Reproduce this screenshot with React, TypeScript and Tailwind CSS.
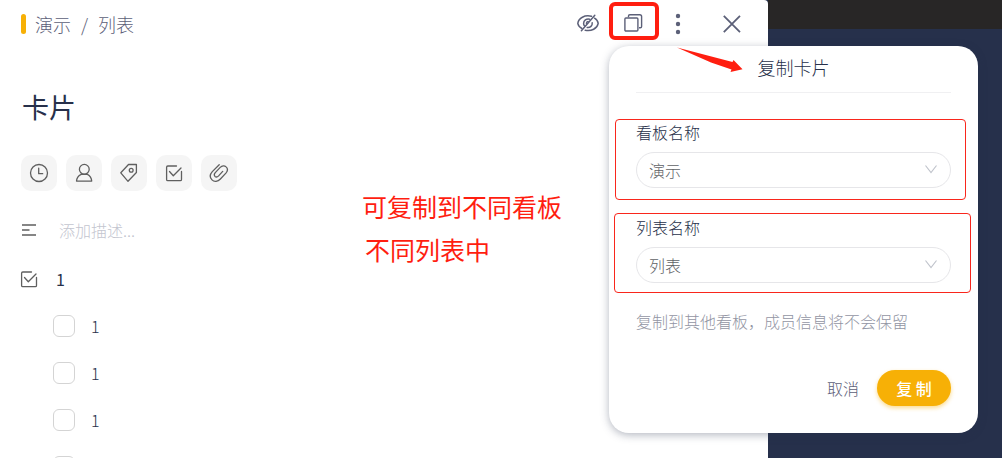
import { useState } from 'react';
import type { ReactNode } from 'react';

const items = [
  { id: 1, name: '1' },
  { id: 2, name: '1' },
  { id: 3, name: '1' },
  { id: 4, name: '1' },
];

function Icon({ size = 20, children }: { size?: number; children: ReactNode }) {
  return (
    <svg
      width={size}
      height={size}
      viewBox={`0 0 ${size} ${size}`}
      fill="none"
      stroke="currentColor"
      strokeWidth="1.3"
      strokeLinecap="round"
      strokeLinejoin="round"
      aria-hidden="true"
    >
      {children}
    </svg>
  );
}

const ClockIcon = () => (
  <Icon>
    <circle cx="10" cy="10" r="8.5" />
    <path d="M9.7 5.2v5.5h4" />
  </Icon>
);

const MemberIcon = () => (
  <Icon>
    <circle cx="10.3" cy="6.3" r="4.9" />
    <path d="M7.2 11.4h6.2c2.600 1.300 4.100 3.500 4.300 6.700H2.500c.2-3.200 1.900-5.400 4.700-6.700z" />
  </Icon>
);

const TagIcon = () => (
  <Icon>
    <path d="M9.5 1.500h7.900v8L9 18.300l-7.200-8.500z" />
    <circle cx="12.200" cy="7.300" r="1.900" />
  </Icon>
);

const CheckIcon = () => (
  <Icon>
    <path d="M12.5 3H3.8a1.200 1.200 0 0 0-1.200 1.200v12.300a1.200 1.200 0 0 0 1.200 1.200h12.500a1.200 1.200 0 0 0 1.200-1.200V8.500" />
    <path d="M5.5 8.500l3.800 4.200L17 5" />
  </Icon>
);

const ClipIcon = () => (
  <Icon>
    <path d="M10.2 1.700 3.3 8.600c-2.700 3-2.300 6.300-.3 8.300 2.200 2.200 5.700 1.900 8.400-.9l5.500-5.900c1.900-2.200 1.800-4.700.2-6.200-1.600-1.600-4-1.500-5.900.5l-4.900 5.200c-1.200 1.400-1.200 2.900-.3 3.800 1 .9 2.400.7 3.600-.5l4.100-4.500" />
  </Icon>
);

const tools = [
  { label: '时间', icon: <ClockIcon /> },
  { label: '成员', icon: <MemberIcon /> },
  { label: '标签', icon: <TagIcon /> },
  { label: '清单', icon: <CheckIcon /> },
  { label: '附件', icon: <ClipIcon /> },
];

function SelectField({ id, label, options }: { id: string; label: string; options: string[] }) {
  return (
    <>
      <label htmlFor={id} className="block text-base leading-6 text-[#27304a]">
        {label}
      </label>
      <div className="relative mt-2">
        <select
          id={id}
          className="block h-9 w-full appearance-none rounded-full border border-[#e6e6e9] bg-white px-3 text-base text-[#606266] outline-none"
        >
          {options.map((option) => (
            <option key={option}>{option}</option>
          ))}
        </select>
        <svg
          className="pointer-events-none absolute top-3 right-3 text-[#c0c4cc]"
          width="16"
          height="12"
          viewBox="0 0 16 12"
          fill="none"
          stroke="currentColor"
          strokeWidth="1.2"
          aria-hidden="true"
        >
          <path d="M2.5 1.500 8 8.500l5.500-7" />
        </svg>
      </div>
    </>
  );
}

function CopyDialog() {
  return (
    <form
      aria-label="复制卡片"
      className="absolute top-[46px] right-6 w-[369px] rounded-[20px] bg-white pb-[27px] shadow-[0_2px_8px_rgba(38,48,75,0.35)]"
      onSubmit={(e) => e.preventDefault()}
    >
      <h2 className="mx-[27px] border-b border-[#f0f0f2] pb-1 text-center text-lg leading-[42px] text-[#27304a]">
        复制卡片
      </h2>

      <div className="mt-[26px] mr-3 ml-[6px] rounded border border-[#f9261c] pr-[14px] pb-[11px] pl-5">
        <SelectField id="board" label="看板名称" options={['演示']} />
      </div>
      <div className="mt-[13px] mr-[7px] ml-[5px] rounded border border-[#f9261c] pt-px pr-[19px] pb-[9px] pl-[21px]">
        <SelectField id="list" label="列表名称" options={['列表']} />
      </div>

      <div className="px-[27px]">
        <p className="mt-4 text-base leading-6 text-[#9295a3]">复制到其他看板，成员信息将不会保留</p>
        <div className="mt-[37px] flex items-center justify-end gap-[18px]">
          <button type="button" className="text-base text-[#5c6078]">
            取消
          </button>
          <button
            type="submit"
            className="h-9 w-[74px] rounded-full bg-[#f7b006] text-base font-medium text-white shadow-[0_2px_4px_rgba(247,176,6,0.45)]"
          >
            复 制
          </button>
        </div>
      </div>
    </form>
  );
}

export default function App() {
  const [done, setDone] = useState<number[]>([]);

  const toggle = (id: number) => {
    setDone((prev) => (prev.includes(id) ? prev.filter((d) => d !== id) : [...prev, id]));
  };

  return (
    <div className="relative flex h-screen overflow-hidden bg-[#26304b] font-['Noto_Sans_CJK_SC',sans-serif] font-light">
      {/* Card detail */}
      <main className="min-w-0 flex-1 overflow-hidden rounded-tr bg-white pl-[21px]">
        <header className="flex h-12 items-center justify-between pr-[25px]">
          <nav className="flex items-center text-lg text-[#5c6078]">
            <span className="mr-[9px] h-5 w-[5px] rounded-sm bg-[#f7b006]" />
            <a href="#board">演示</a>
            <span className="mx-[10px]">/</span>
            <a href="#list">列表</a>
          </nav>
          <div className="flex h-12 items-start text-[#5c6078]">
            <button type="button" aria-label="关注" className="mt-3 mr-[10px]">
              <svg width="22" height="22" viewBox="0 0 22 22" fill="none" stroke="currentColor" strokeWidth="1.5" strokeLinecap="round" aria-hidden="true">
                <path d="M14.5 4.300C7.500 2.700 1.700 6 .8 11.300c.4 2.200 1.900 4 4.100 5.200" />
                <path d="M8.200 18.300c6.300 1.300 12-1.800 13-7-.3-2-1.600-3.900-3.700-5.100" />
                <path d="M12.6 7.200C9.300 6.500 6.600 8.500 6.600 11.500c0 1 .4 1.900 1 2.500M10.200 15.500c3.100.4 5.300-1.800 5-4.700M9.400 11.300c.1-.9.800-1.600 1.700-1.700" />
                <path d="M17.8 3.200 4.400 18.800" />
              </svg>
            </button>
            <button
              type="button"
              aria-label="复制"
              className="mt-[2px] flex h-[38px] w-[50px] items-center justify-center rounded-md border-4 border-[#ff1e10]"
            >
              <svg className="mt-1" width="20" height="20" viewBox="0 0 20 20" fill="none" stroke="currentColor" strokeWidth="1.4" aria-hidden="true">
                <rect x=".9" y="5" width="13" height="13" rx="1" />
                <path d="M4.500 4.200V3a1.300 1.300 0 0 1 1.300-1.300h10A1.800 1.800 0 0 1 17.600 3.500v9.900a1.300 1.300 0 0 1-1.300 1.300H15" />
              </svg>
            </button>
            <button type="button" aria-label="更多" className="mt-3 ml-[13px]">
              <svg width="12" height="24" viewBox="0 0 12 24" fill="currentColor" aria-hidden="true">
                <circle cx="6" cy="4" r="2.200" />
                <circle cx="6" cy="12" r="2.200" />
                <circle cx="6" cy="20" r="2.200" />
              </svg>
            </button>
            <button type="button" aria-label="关闭" className="mt-3 ml-[37px]">
              <svg width="22" height="24" viewBox="0 0 22 24" fill="none" stroke="currentColor" strokeWidth="1.8" aria-hidden="true">
                <path d="M2.800 3.800 19 20.200M19 3.800 2.800 20.200" />
              </svg>
            </button>
          </div>
        </header>

        <h1 className="mt-[39px] pl-px text-[27px] leading-10 font-normal text-[#27304a]">卡片</h1>

        <div className="mt-7 flex gap-[9px]">
          {tools.map((tool) => (
            <button
              key={tool.label}
              type="button"
              aria-label={tool.label}
              className="flex size-9 items-center justify-center rounded-[10px] bg-[#f5f5f5] text-[#5f5f5f]"
            >
              {tool.icon}
            </button>
          ))}
        </div>

        {/* Description */}
        <div className="mt-[27px] flex h-6 items-center text-[#5f5f5f]">
          <svg width="16" height="14" viewBox="0 0 16 14" stroke="currentColor" strokeWidth="1.3" aria-hidden="true">
            <path d="M1 2h14M1 7h7.500M1 12h14" />
          </svg>
          <input
            aria-label="描述"
            placeholder="添加描述..."
            className="ml-[22px] w-60 bg-transparent text-base outline-none placeholder:text-[#c3c5cf]"
          />
        </div>

        {/* Checklist */}
        <section>
          <h2 className="-ml-[2px] mt-[25px] flex h-6 items-center text-base font-normal text-[#27304a]">
            <span className="mr-[17px] text-[#5f5f5f]">
              <CheckIcon />
            </span>
            1
          </h2>
          <ul className="mt-6 ml-8 flex flex-col gap-[25px]">
            {items.map((item) => (
              <li key={item.id}>
                <label className="flex h-[22px] items-center gap-4 text-base text-[#27304a]">
                  <input
                    type="checkbox"
                    checked={done.includes(item.id)}
                    onChange={() => toggle(item.id)}
                    className="size-[22px] appearance-none rounded-md border border-[#d4d4d4] bg-white checked:bg-[#f7b006]"
                  />
                  {item.name}
                </label>
              </li>
            ))}
          </ul>
        </section>
      </main>

      {/* Board behind the card */}
      <aside className="w-[234px] shrink-0">
        <div className="h-[29px] bg-[#282626]" />
      </aside>

      <CopyDialog />

      {/* Notes */}
      <div className="absolute top-[185px] left-[362px] text-[25px] leading-[43px] font-normal text-[#ff1e10]">
        <p>可复制到不同看板</p>
        <p className="pl-[3px]">不同列表中</p>
      </div>
      <svg className="absolute top-[46px] right-[258px] text-[#ff1e10]" width="68" height="28" viewBox="0 0 68 28" fill="currentColor" aria-hidden="true">
        <path d="M1 1.500 56.500 16 57.500 14 66.500 23.300 54.500 26 55.500 23.500 35 16.500Z" />
      </svg>
    </div>
  );
}
